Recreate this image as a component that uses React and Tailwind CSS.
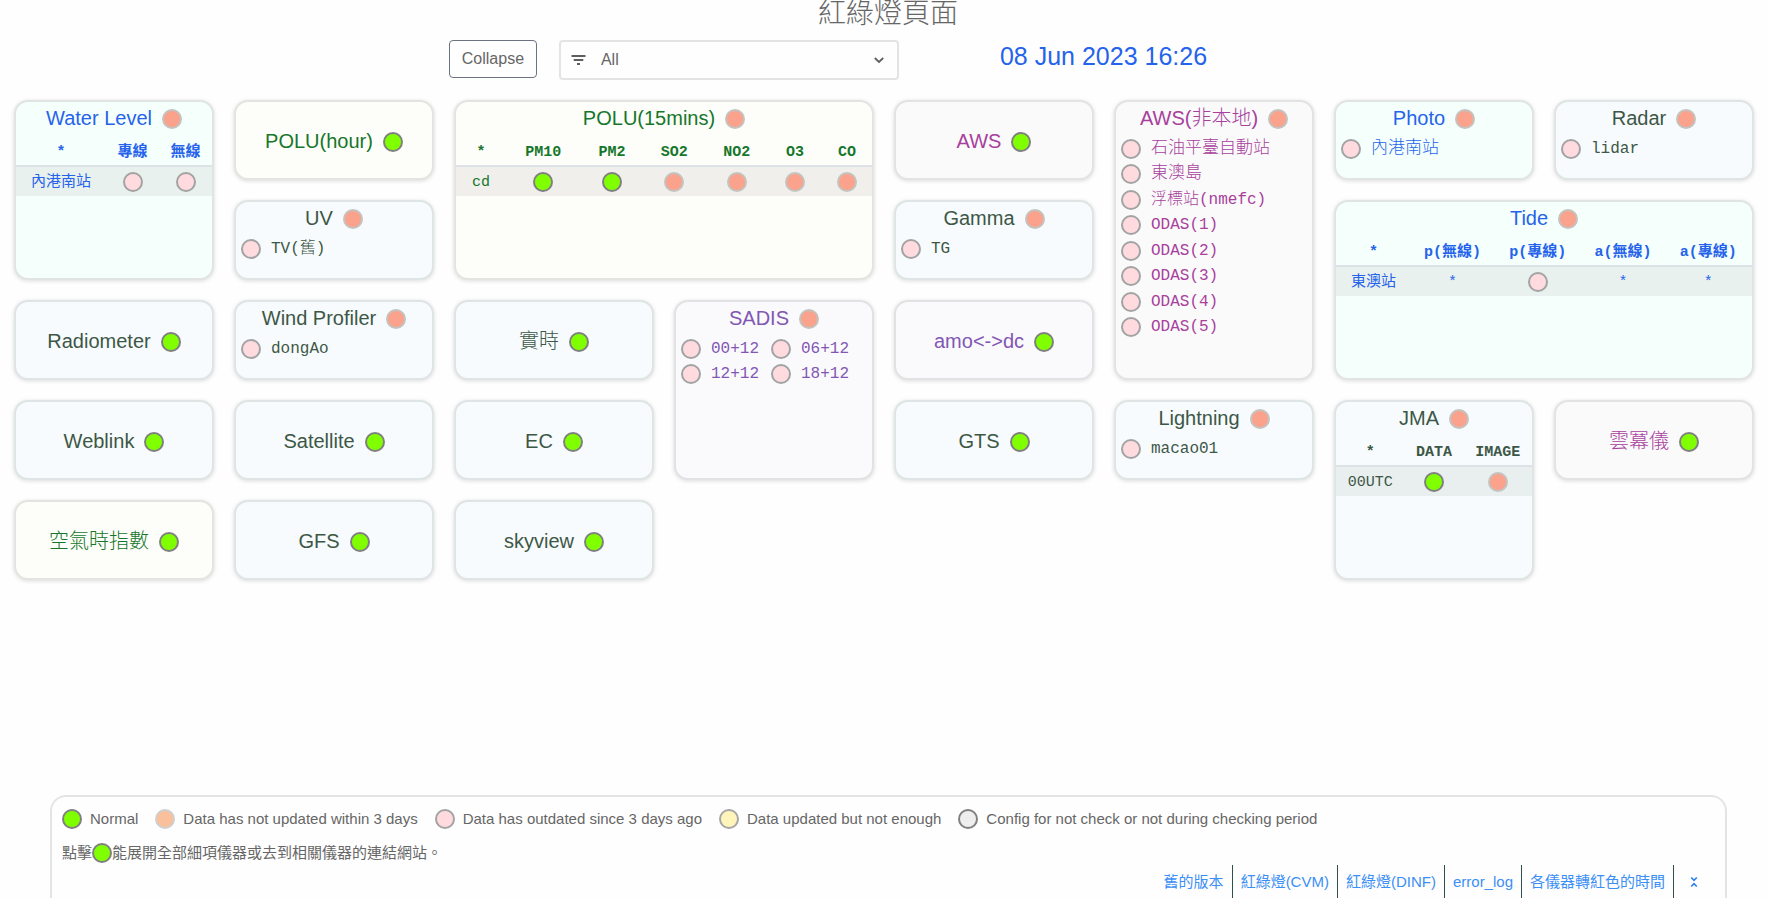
import React from "react";

const TONES = {
  blue: "bg-[#f5fffc] text-[#2563eb] border-[#e0e5e4]",
  green: "bg-[#fdfdf9] text-[#15772b] border-[#e4e5e1]",
  slate: "bg-[#f7fbfd] text-[#3d5746] border-[#dfe4e4]",
  pink: "bg-[#fafafa] text-[#a8409d] border-[#e2e3e3]",
  purple: "bg-[#fafafd] text-[#8257b3] border-[#e1e2e4]",
};

const LIGHTS = {
  normal: "bg-[#80ff00] border-[#808080]",
  late: "bg-[#fba28d] border-[#c3c3c0]",
  peach: "bg-[#f9c09b] border-[#cfcfcf]",
  old: "bg-[#ffdadf] border-[#a2a4a4]",
  partial: "bg-[#fff5ba] border-[#a6a6a6]",
  off: "bg-[#eeeeee] border-[#808080]",
};

const SANS = "font-['Liberation_Sans','Noto_Sans_CJK_TC',sans-serif]";
const MONO = "font-['Liberation_Mono','Noto_Sans_CJK_TC',monospace]";

function Light({ kind }) {
  return <span className={`inline-block size-5 shrink-0 rounded-full border-2 ${LIGHTS[kind]}`} />;
}

function Heading({ title, kind }) {
  return (
    <h2 className="flex h-[30px] items-center justify-center gap-2.5 text-xl leading-7">
      <span className="pb-0.5">{title}</span>
      <Light kind={kind} />
    </h2>
  );
}

function Card({ title, kind = "late", tone = "slate", place, children }) {
  return (
    <section
      className={`flex min-w-0 flex-col overflow-hidden rounded-[14px] border-2 shadow-[0_1px_4px_rgba(0,0,0,0.14)] ${TONES[tone]} ${place} ${children ? "pt-0.5" : "justify-center pt-1"}`}
    >
      <Heading title={title} kind={kind} />
      {children}
    </section>
  );
}

function Items({ items }) {
  return (
    <ul className={`flex flex-wrap gap-x-3 px-[5px] pt-0.5 text-[17px] ${MONO}`}>
      {items.map(({ name, half }) => (
        <li key={name} className={`flex h-[1.5em] items-center gap-2.5 ${half ? "" : "w-full"}`}>
          <Light kind="old" />
          <span className={/[\x20-\x7e]/.test(name) ? "text-base leading-6" : "text-[17px] leading-6"}>
            {name}
          </span>
        </li>
      ))}
    </ul>
  );
}

function Matrix({ head, cols, row, stripe }) {
  return (
    <table className={`w-full table-fixed border-collapse text-center text-[15px] leading-5 font-normal ${MONO}`}>
      <colgroup>
        {cols.map((c, i) => (
          <col key={i} className={c} />
        ))}
      </colgroup>
      <thead>
        <tr className="h-8 border-b-2 border-[#dde2e6]">
          {head.map((h) => (
            <th key={h} scope="col" className="p-0 pt-1.5 font-bold whitespace-nowrap">
              {h}
            </th>
          ))}
        </tr>
      </thead>
      <tbody>
        <tr className={`h-[30px] ${stripe}`}>
          {row.map((cell, i) =>
            LIGHTS[cell] ? (
              <td key={i} className="p-0">
                <span className="flex justify-center">
                  <Light kind={cell} />
                </span>
              </td>
            ) : (
              <td key={i} className="p-0 pt-0.5 whitespace-nowrap">
                {cell}
              </td>
            )
          )}
        </tr>
      </tbody>
    </table>
  );
}

const one = (name) => [{ name }];
const LEGEND = [
  ["normal", "Normal"],
  ["peach", "Data has not updated within 3 days"],
  ["old", "Data has outdated since 3 days ago"],
  ["partial", "Data updated but not enough"],
  ["off", "Config for not check or not during checking period"],
];
const LINKS = ["舊的版本", "紅綠燈(CVM)", "紅綠燈(DINF)", "error_log", "各儀器轉紅色的時間"];

export default function App() {
  return (
    <div lang="zh-Hant" className={`flex min-h-screen flex-col bg-[#fefefe] font-light text-[#666666] ${SANS}`}>
      <header>
        <h1 className="pl-2 text-center text-[28px] leading-7">紅綠燈頁面</h1>
        <div className="flex items-start justify-center pt-3 pr-28">
          <button
            type="button"
            className="h-[38px] w-[88px] rounded border border-[#6b7280] text-base"
          >
            Collapse
          </button>
          <div className="relative ml-[22px] w-[340px]">
            <svg
              className="pointer-events-none absolute top-3 left-[11px] size-4"
              viewBox="0 0 16 16"
              fill="none"
              stroke="#5f5f5f"
              strokeWidth="2"
            >
              <path d="M1.5 4h14M3.7 8h9.6M7 12h3" />
            </svg>
            <select
              aria-label="Filter"
              className="block h-10 w-full appearance-none rounded border-2 border-[#e4e4e4] bg-transparent pl-10 text-base outline-none"
            >
              <option>All</option>
            </select>
            <svg
              className="pointer-events-none absolute top-3 right-3 size-4"
              viewBox="0 0 16 16"
              fill="none"
              stroke="#5f5f5f"
              strokeWidth="1.8"
            >
              <path d="M3.8 6l4.2 4 4.2-4" />
            </svg>
          </div>
          <time dateTime="2023-06-08T16:26" className="ml-[101px] text-[25px] leading-8 text-[#2563eb]">
            08 Jun 2023 16:26
          </time>
        </div>
      </header>

      <main className="mt-5 grid auto-rows-[80px] grid-cols-8 gap-5 px-3.5">
        <Card title="Water Level" tone="blue" place="col-start-1 row-start-1 row-span-2">
          <Matrix
            head={["*", "專線", "無線"]}
            cols={["w-[46%]", "w-[27%]", "w-[27%]"]}
            row={["內港南站", "old", "old"]}
            stripe="bg-[#e9f1ee]"
          />
        </Card>
        <Card title="POLU(hour)" kind="normal" tone="green" place="col-start-2 row-start-1" />
        <Card title="POLU(15mins)" tone="green" place="col-start-3 col-span-2 row-start-1 row-span-2">
          <Matrix
            head={["*", "PM10", "PM2", "SO2", "NO2", "O3", "CO"]}
            cols={["w-[12%]", "w-[18%]", "w-[15%]", "w-[15%]", "w-[15%]", "w-[13%]", "w-[12%]"]}
            row={["cd", "normal", "normal", "late", "late", "late", "late"]}
            stripe="bg-[#f0efec]"
          />
        </Card>
        <Card title="AWS" kind="normal" tone="pink" place="col-start-5 row-start-1" />
        <Card title="AWS(非本地)" tone="pink" place="col-start-6 row-start-1 row-span-3">
          <Items
            items={["石油平臺自動站", "東澳島", "浮標站(nmefc)", "ODAS(1)", "ODAS(2)", "ODAS(3)", "ODAS(4)", "ODAS(5)"].map(
              (name) => ({ name })
            )}
          />
        </Card>
        <Card title="Photo" tone="blue" place="col-start-7 row-start-1">
          <Items items={one("內港南站")} />
        </Card>
        <Card title="Radar" place="col-start-8 row-start-1">
          <Items items={one("lidar")} />
        </Card>

        <Card title="UV" place="col-start-2 row-start-2">
          <Items items={one("TV(舊)")} />
        </Card>
        <Card title="Gamma" place="col-start-5 row-start-2">
          <Items items={one("TG")} />
        </Card>
        <Card title="Tide" tone="blue" place="col-start-7 col-span-2 row-start-2 row-span-2">
          <Matrix
            head={["*", "p(無線)", "p(專線)", "a(無線)", "a(專線)"]}
            cols={["w-[18%]", "w-[20%]", "w-[21%]", "w-[20%]", "w-[21%]"]}
            row={["東澳站", "*", "old", "*", "*"]}
            stripe="bg-[#e9f1ee]"
          />
        </Card>

        <Card title="Radiometer" kind="normal" place="col-start-1 row-start-3" />
        <Card title="Wind Profiler" place="col-start-2 row-start-3">
          <Items items={one("dongAo")} />
        </Card>
        <Card title="實時" kind="normal" place="col-start-3 row-start-3" />
        <Card title="SADIS" tone="purple" place="col-start-4 row-start-3 row-span-2">
          <Items items={["00+12", "06+12", "12+12", "18+12"].map((name) => ({ name, half: true }))} />
        </Card>
        <Card title="amo<->dc" kind="normal" tone="purple" place="col-start-5 row-start-3" />

        <Card title="Weblink" kind="normal" place="col-start-1 row-start-4" />
        <Card title="Satellite" kind="normal" place="col-start-2 row-start-4" />
        <Card title="EC" kind="normal" place="col-start-3 row-start-4" />
        <Card title="GTS" kind="normal" place="col-start-5 row-start-4" />
        <Card title="Lightning" place="col-start-6 row-start-4">
          <Items items={one("macao01")} />
        </Card>
        <Card title="JMA" place="col-start-7 row-start-4 row-span-2">
          <Matrix
            head={["*", "DATA", "IMAGE"]}
            cols={["w-[35%]", "w-[30%]", "w-[35%]"]}
            row={["00UTC", "normal", "late"]}
            stripe="bg-[#e9eeee]"
          />
        </Card>
        <Card title="雲冪儀" kind="normal" tone="pink" place="col-start-8 row-start-4" />

        <Card title="空氣時指數" kind="normal" tone="green" place="col-start-1 row-start-5" />
        <Card title="GFS" kind="normal" place="col-start-2 row-start-5" />
        <Card title="skyview" kind="normal" place="col-start-3 row-start-5" />
      </main>

      <footer className="mt-auto mr-[41px] ml-[50px] rounded-t-2xl border-2 border-b-0 border-[#e4e4e4] text-[15px] font-normal">
        <ul className="flex flex-wrap gap-x-[17px] px-2.5 pt-2.5">
          {LEGEND.map(([kind, label]) => (
            <li key={kind} className="flex items-center gap-2 leading-6">
              <Light kind={kind} />
              {label}
            </li>
          ))}
        </ul>
        <p className="flex items-center px-2.5 pt-2.5 leading-6">
          點擊
          <Light kind="normal" />
          能展開全部細項儀器或去到相關儀器的連結網站。
        </p>
        <nav className="flex justify-end pr-[11px]">
          {LINKS.map((label) => (
            <a key={label} href="#" className="border-r border-[#2f4f4f] px-2 leading-[33px] text-[#3b8ff5]">
              {label}
            </a>
          ))}
          <button type="button" aria-label="Fold panel" className="flex w-10 items-center justify-center">
            <svg className="h-3 w-2" viewBox="0 0 8 12" fill="none" stroke="#2b7ff0" strokeWidth="1.6">
              <path d="M1.2 1.5l2.8 2.8 2.8-2.8M1.2 10.5l2.8-2.8 2.8 2.8" />
            </svg>
          </button>
        </nav>
      </footer>
    </div>
  );
}
